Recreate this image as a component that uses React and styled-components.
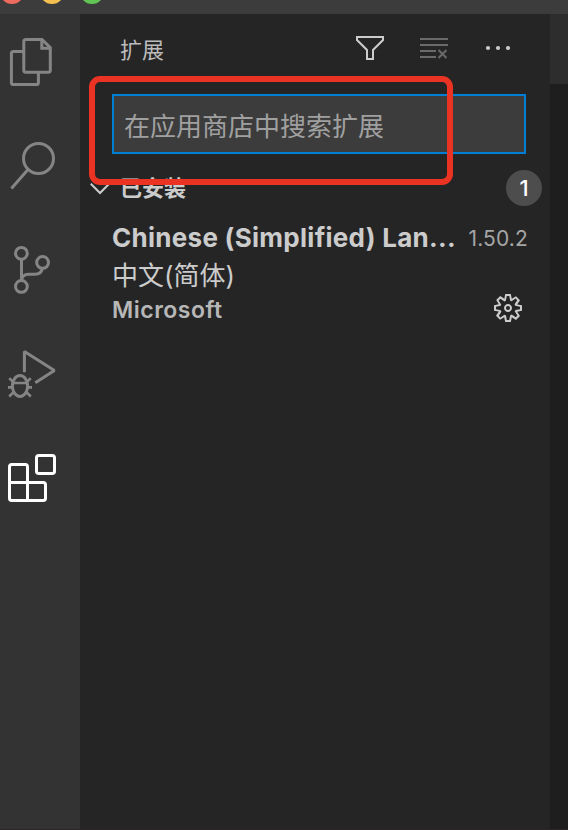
import React from "react";
import styled, { createGlobalStyle } from "styled-components";

const GlobalStyle = createGlobalStyle`
  * { box-sizing: border-box; }
  body {
    margin: 0;
    overflow: hidden;
    background: #1e1e1e;
    font-family: Inter, "Noto Sans CJK SC", sans-serif;
  }
`;

const Window = styled.div`
  display: flex;
  flex-direction: column;
  width: 568px;
  height: 830px;
  overflow: hidden;
`;

const TitleBar = styled.header`
  display: flex;
  align-items: flex-start;
  gap: 16px;
  height: 14px;
  background: #3c3c3c;
  overflow: hidden;
`;

const TrafficLight = styled.span`
  flex: none;
  width: 24px;
  height: 24px;
  margin-top: -20px;
  border-radius: 50%;
  background: ${(p) => p.$color};
`;

const Body = styled.div`
  display: flex;
  flex: 1;
  min-height: 0;
`;

const ActivityBar = styled.nav`
  display: flex;
  flex-direction: column;
  gap: 8px;
  width: 80px;
  background: #333333;
`;

const ActivityButton = styled.button`
  display: flex;
  width: 80px;
  height: 96px;
  padding: 0;
  border: 0;
  background: none;
  color: ${(p) => (p.$active ? "#ffffff" : "#858585")};
`;

const Glyph = styled.svg`
  display: block;
  flex: none;
  overflow: visible;
  fill: none;
  stroke: currentColor;
  stroke-width: ${(p) => p.$weight || 2};
`;

const SideBar = styled.aside`
  position: relative;
  display: flex;
  flex-direction: column;
  width: 470px;
  background: #252526;
  color: #cccccc;
`;

const SideHeader = styled.div`
  display: flex;
  align-items: center;
  justify-content: space-between;
  height: 70px;
  padding: 0 36px 2px 40px;
`;

const SideTitle = styled.h1`
  margin: 4px 0 0;
  font-size: 22px;
  font-weight: 400;
  line-height: 32px;
  color: #bbbbbb;
`;

const Actions = styled.div`
  display: flex;
  gap: 32px;
`;

const ActionButton = styled.button`
  display: flex;
  width: 32px;
  height: 32px;
  padding: 0;
  border: 0;
  background: none;
  color: ${(p) => (p.$disabled ? "#6a6a6a" : "#cccccc")};
`;

const SearchBox = styled.div`
  display: flex;
  align-items: center;
  width: 414px;
  height: 60px;
  margin: 10px 0 0 32px;
  padding: 6px 10px 0;
  border: 2px solid #007fd4;
  background: #3c3c3c;
  color: #a0a0a0;
  font-size: 26px;
  line-height: 40px;
  white-space: nowrap;
`;

const Section = styled.div`
  display: flex;
  align-items: center;
  height: 44px;
  margin-top: 12px;
  padding: 0 8px;
`;

const SectionTitle = styled.h2`
  flex: 1;
  margin: 0 0 0 8px;
  font-size: 22px;
  font-weight: 700;
  line-height: 32px;
`;

const Badge = styled.span`
  display: flex;
  align-items: center;
  justify-content: center;
  width: 36px;
  height: 36px;
  border-radius: 18px;
  background: #4d4d4d;
  color: #ffffff;
  font-size: 22px;
  font-weight: 500;
`;

const Extension = styled.article`
  display: flex;
  flex-direction: column;
  margin-top: 7px;
  padding: 0 22px 0 32px;
`;

const ExtensionRow = styled.div`
  display: flex;
  align-items: center;
  justify-content: space-between;
  height: ${(p) => p.$height}px;
  white-space: nowrap;
`;

const Name = styled.span`
  font-size: 26px;
  font-weight: 700;
  letter-spacing: 0.28px;
`;

const Version = styled.span`
  padding-top: 3px;
  color: #a5a5a5;
  font-size: 21px;
  letter-spacing: 0.15px;
`;

const Description = styled.span`
  padding-top: 2px;
  font-size: 26px;
  line-height: 38px;
`;

const Publisher = styled.span`
  color: #b7b7b7;
  font-size: 23px;
  font-weight: 600;
  letter-spacing: 0.5px;
`;

const Manage = styled.button`
  display: flex;
  margin: 0 4px 4px 0;
  padding: 0;
  border: 0;
  background: none;
  color: #cccccc;
`;

const Highlight = styled.div`
  position: absolute;
  top: 62px;
  left: 9px;
  width: 364px;
  height: 109px;
  border: 6px solid #eb3323;
  border-radius: 11px;
  pointer-events: none;
`;

const Editor = styled.main`
  flex: 1;
  background: #1e1e1e;
`;

const EditorTabs = styled.div`
  height: 70px;
  background: #2d2d2d;
`;

const BottomEdge = styled.div`
  height: 1px;
  background: #2b2529;
`;

const activities = [
  {
    label: "Explorer",
    art: (
      <>
        <path d="M26 25.5H42L50.3 33.7V56.2Q50.3 58.3 48.2 58.3H26Q23.8 58.3 23.8 56.2V27.6Q23.8 25.5 26 25.5Z" />
        <path d="M41.8 26V34.2H50M23 37.5H13.6Q11.4 37.5 11.4 39.7V68.4Q11.4 70.5 13.6 70.5H36.3Q38.4 70.5 38.4 68.4V59" />
      </>
    ),
  },
  {
    label: "Search",
    art: (
      <>
        <circle cx="38.5" cy="40.5" r="15" />
        <path d="M28.2 51.2L11.4 70.5" />
      </>
    ),
  },
  {
    label: "Source Control",
    art: (
      <>
        <circle cx="21.4" cy="31.3" r="5.9" />
        <circle cx="42.6" cy="40.4" r="5.9" />
        <circle cx="21.4" cy="64.4" r="5.9" />
        <path d="M21.5 37.2V58.5C22 54.5 24.5 52.3 28.5 52.3H35C39 52.3 41.7 50.5 42.3 46.3" />
      </>
    ),
  },
  {
    label: "Run",
    art: (
      <>
        <path d="M24.4 46.2V25.6L54.4 44.5L35.3 56.7" strokeLinejoin="bevel" />
        <ellipse cx="20" cy="60" rx="7.6" ry="10.5" />
        <path
          d="M12.5 57H27.5M8 61.4H12.5M27.5 61.4H32M9.2 52.2L13.5 56M30.8 52.2L26.5 56M9.2 70.5L13.8 66M30.8 70.5L26.2 66"
          strokeWidth="2.6"
        />
      </>
    ),
  },
  {
    label: "Extensions",
    active: true,
    art: (
      <>
        <rect x="36.5" y="25.5" width="18" height="18" rx="2.3" />
        <path d="M11.8 34.5H25.2Q27.5 34.5 27.5 36.8V52.4H43.2Q45.5 52.4 45.5 54.7V68.2Q45.5 70.5 43.2 70.5H11.8Q9.5 70.5 9.5 68.2V36.8Q9.5 34.5 11.8 34.5ZM9.5 52.4H27.5V70.5" />
      </>
    ),
  },
];

const actions = [
  {
    label: "Filter",
    art: <path d="M3 5H29V8L19 18V27H13V18L3 8Z" />,
  },
  {
    label: "Clear",
    disabled: true,
    art: <path d="M2 7H30M2 13H30M2 19H18M2 25H18M20.5 18L28.5 26M28.5 18L20.5 26" />,
  },
  {
    label: "More",
    art: (
      <g fill="currentColor" stroke="none">
        <circle cx="6" cy="16" r="2.1" />
        <circle cx="16" cy="16" r="2.1" />
        <circle cx="26" cy="16" r="2.1" />
      </g>
    ),
  },
];

export default function App() {
  return (
    <>
      <GlobalStyle />
      <Window>
        <TitleBar>
          <TrafficLight $color="#ed6a5e" />
          <TrafficLight $color="#f5bf4f" />
          <TrafficLight $color="#61c554" />
        </TitleBar>
        <Body>
          <ActivityBar>
            {activities.map((item) => (
              <ActivityButton key={item.label} $active={item.active} aria-label={item.label}>
                <Glyph width="80" height="96" viewBox="0 0 80 96" $weight={3}>
                  {item.art}
                </Glyph>
              </ActivityButton>
            ))}
          </ActivityBar>
          <SideBar>
            <SideHeader>
              <SideTitle>扩展</SideTitle>
              <Actions>
                {actions.map((item) => (
                  <ActionButton key={item.label} $disabled={item.disabled} aria-label={item.label}>
                    <Glyph width="32" height="32" viewBox="0 0 32 32">
                      {item.art}
                    </Glyph>
                  </ActionButton>
                ))}
              </Actions>
            </SideHeader>
            <SearchBox>在应用商店中搜索扩展</SearchBox>
            <Section>
              <Glyph width="24" height="24" viewBox="0 0 24 24">
                <path d="M2.8 7.8L12 17L21.2 7.8" />
              </Glyph>
              <SectionTitle>已安装</SectionTitle>
              <Badge>1</Badge>
            </Section>
            <Extension>
              <ExtensionRow $height={40}>
                <Name>Chinese (Simplified) Lan...</Name>
                <Version>1.50.2</Version>
              </ExtensionRow>
              <ExtensionRow $height={36}>
                <Description>中文(简体)</Description>
              </ExtensionRow>
              <ExtensionRow $height={34}>
                <Publisher>Microsoft</Publisher>
                <Manage aria-label="Manage">
                  <Glyph width="32" height="32" viewBox="0 0 16 16">
                    <path
                      fill="currentColor"
                      stroke="none"
                      fillRule="evenodd"
                      d="M9.1 4.4L8.6 2H7.4l-.5 2.4-.7.3-2-1.3-.9.8 1.3 2-.2.7-2.4.5v1.2l2.4.5.3.8-1.3 2 .8.8 2-1.3.8.3.4 2.3h1.2l.5-2.4.8-.3 2 1.3.8-.8-1.3-2 .3-.8 2.3-.4V7.4l-2.4-.5-.3-.8 1.3-2-.8-.8-2 1.3-.7-.2zM9.4 1l.5 2.4L12 2.1l2 2-1.4 2.1 2.4.4v2.8l-2.4.5L14 12l-2 2-2.1-1.4-.5 2.4H6.6l-.5-2.4L4 13.9l-2-2 1.4-2.1L1 9.4V6.6l2.4-.5L2.1 4l2-2 2.1 1.4.4-2.4h2.8zm.6 7c0 1.1-.9 2-2 2s-2-.9-2-2 .9-2 2-2 2 .9 2 2zM8 9c.6 0 1-.4 1-1s-.4-1-1-1-1 .4-1 1 .4 1 1 1z"
                    />
                  </Glyph>
                </Manage>
              </ExtensionRow>
            </Extension>
            <Highlight />
          </SideBar>
          <Editor>
            <EditorTabs />
          </Editor>
        </Body>
        <BottomEdge />
      </Window>
    </>
  );
}
